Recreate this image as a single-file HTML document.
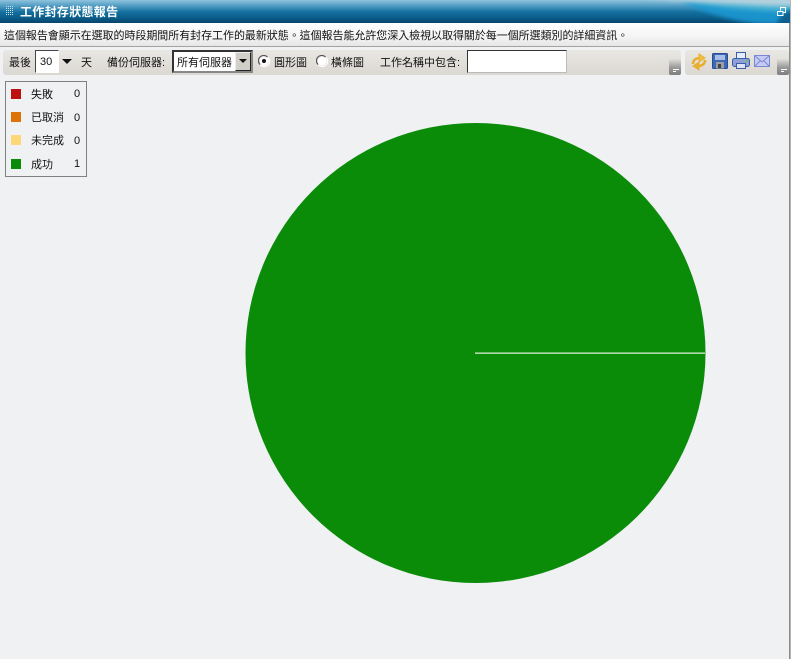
<!DOCTYPE html>
<html><head><meta charset="utf-8">
<style>
html,body{margin:0;padding:0;width:792px;height:659px;overflow:hidden;background:#fff}
body{position:relative;font-family:"Liberation Sans","WenQuanYi Zen Hei","Noto Sans CJK TC",sans-serif;font-size:11px;color:#111}
.a{position:absolute;white-space:nowrap;line-height:12px}
#main{position:absolute;left:0;top:0;width:789px;height:659px;background:#eff1f3}
#rb{position:absolute;left:789px;top:0;width:1px;height:659px;background:#8c8c8c}
#rb2{position:absolute;left:790px;top:0;width:1px;height:659px;background:#b5b5b5}
#title{position:absolute;left:0;top:0;width:790px;height:23px;background:linear-gradient(#8fc3dd 0,#4f9bc2 6px,#14709f 12px,#0b5c88 18px,#07466c 23px);overflow:hidden}
#desc{position:absolute;left:0;top:23px;width:789px;height:24px;background:linear-gradient(#fff,#f4f4f4 60%,#e6e6e6);border-bottom:1px solid #a3a3a3;box-sizing:border-box}
.bar{position:absolute;top:50px;height:25px;background:linear-gradient(#e9e7e3,#dbd8d2);border-radius:3px}
.grip{position:absolute;top:50px;width:12px;height:25px;background:linear-gradient(rgba(222,220,214,0) 0,rgba(222,220,214,0) 35%,#9a9a9a 70%,#7e7e7e);border-radius:0 0 2px 2px}
.grip i{position:absolute;left:4px;bottom:5px;width:6px;height:1px;background:#fff}
.grip b{position:absolute;left:4px;bottom:3px;width:3px;height:1px;background:#fff}
</style></head><body>
<div id="main"></div><div id="rb"></div><div id="rb2"></div>
<div id="title">
<svg width="790" height="23" style="position:absolute;left:0;top:0">
<defs><filter id="b" x="-20%" y="-50%" width="140%" height="200%"><feGaussianBlur stdDeviation="2.200"/></filter></defs>
<path d="M680 2 C705 12 735 24 775 25 L800 12 L800 4Z" fill="#1a98d2" filter="url(#b)" opacity=".9"/>
<path d="M690 2 C720 8 750 11 800 12 L800 2Z" fill="#48b4d2" filter="url(#b)" opacity=".9"/>
<path d="M640 -3 C700 3 750 6 800 6 L800 -3Z" fill="#b4d2de" filter="url(#b)"/>
<path d="M776 26 L782 14 L795 8 L795 26Z" fill="#0a5f8e" filter="url(#b)"/>
<g fill="#cfe3ee"><rect x="6" y="6" width="1" height="1"/><rect x="8" y="6" width="1" height="1"/><rect x="10" y="6" width="1" height="1"/><rect x="12" y="6" width="1" height="1"/><rect x="6" y="8" width="1" height="1"/><rect x="8" y="8" width="1" height="1"/><rect x="10" y="8" width="1" height="1"/><rect x="12" y="8" width="1" height="1"/><rect x="6" y="10" width="1" height="1"/><rect x="8" y="10" width="1" height="1"/><rect x="10" y="10" width="1" height="1"/><rect x="12" y="10" width="1" height="1"/><rect x="6" y="12" width="1" height="1"/><rect x="8" y="12" width="1" height="1"/><rect x="10" y="12" width="1" height="1"/><rect x="12" y="12" width="1" height="1"/><rect x="6" y="14" width="1" height="1"/><rect x="8" y="14" width="1" height="1"/><rect x="10" y="14" width="1" height="1"/><rect x="12" y="14" width="1" height="1"/></g>
<path d="M777.500 11.500h5.500v4h-5.500zM780.500 10.500v-3h5v5h-2" fill="none" stroke="#fff"/>
</svg>
<div class="a" style="left:20px;top:5px;color:#fff;font-size:12px;font-weight:bold;line-height:14px;letter-spacing:.3px">工作封存狀態報告</div>
</div>
<div id="desc"><div class="a" style="left:4px;top:7px;color:#111;letter-spacing:-.05px">這個報告會顯示在選取的時段期間所有封存工作的最新狀態。這個報告能允許您深入檢視以取得關於每一個所選類別的詳細資訊。</div></div>
<div class="bar" style="left:3px;width:678px"></div>
<div class="grip" style="left:669px"><i></i><b></b></div>
<div class="bar" style="left:685px;width:104px"></div>
<div class="grip" style="left:777px"><i></i><b></b></div>
<div class="a" style="left:9px;top:57px">最後</div>
<div style="position:absolute;left:35px;top:50px;width:24px;height:23px;box-sizing:border-box;background:#fff;border:1px solid;border-color:#444 #fff #fff #444"></div>
<div class="a" style="left:40px;top:56px;font-size:11px">30</div>
<svg width="12" height="6" style="position:absolute;left:62px;top:59px"><path d="M0 0H10L5 5Z" fill="#111"/></svg>
<div class="a" style="left:81px;top:57px">天</div>
<div class="a" style="left:107px;top:57px">備份伺服器:</div>
<div style="position:absolute;left:172px;top:50px;width:81px;height:23px;box-sizing:border-box;background:#fff;border:2px solid;border-color:#333 #888 #888 #333"></div>
<div class="a" style="left:177px;top:57px">所有伺服器</div>
<div style="position:absolute;left:235px;top:52px;width:16px;height:19px;box-sizing:border-box;background:#d2cfc8;border:1px solid;border-color:#eee #222 #222 #eee"></div>
<svg width="9" height="5" style="position:absolute;left:239px;top:59px"><path d="M0 0H8L4 4Z" fill="#111"/></svg>
<svg width="14" height="14" style="position:absolute;left:258px;top:55px"><circle cx="6" cy="6" r="4.500" fill="#fff"/><path d="M2 9.500A5 5 0 0 1 9.500 2" fill="none" stroke="#555" stroke-width="1.200"/><path d="M10 2.500A5 5 0 0 1 2.500 10" fill="none" stroke="#fff" stroke-width="1.200"/><circle cx="6" cy="6" r="2" fill="#111"/></svg>
<div class="a" style="left:274px;top:57px">圓形圖</div>
<svg width="14" height="14" style="position:absolute;left:316px;top:55px"><circle cx="6" cy="6" r="4.500" fill="#fff"/><path d="M2 9.500A5 5 0 0 1 9.500 2" fill="none" stroke="#555" stroke-width="1.200"/><path d="M10 2.500A5 5 0 0 1 2.500 10" fill="none" stroke="#fff" stroke-width="1.200"/></svg>
<div class="a" style="left:331px;top:57px">橫條圖</div>
<div class="a" style="left:380px;top:57px">工作名稱中包含:</div>
<div style="position:absolute;left:467px;top:50px;width:100px;height:23px;box-sizing:border-box;background:#fff;border:1px solid;border-color:#333 #bbb #bbb #333"></div>
<svg width="16" height="18" viewBox="0 0 16 18" style="position:absolute;left:691px;top:53px" fill="none" stroke="#e8ae30" stroke-width="2.600"><path d="M2 11C2 7 5 5 9 5"/><path d="M8 1l6 4-6 4z" fill="#f0c040" stroke-width="1"/><path d="M14 7C14 11 11 13 7 13"/><path d="M8 9l-6 4 6 4z" fill="#e8ae30" stroke-width="1"/></svg>
<svg width="16" height="16" viewBox="0 0 16 16" style="position:absolute;left:712px;top:53px"><rect x=".5" y=".5" width="15" height="15" rx="1" fill="#3f68b5" stroke="#2a4a94"/><rect x="3" y="2" width="10" height="5" fill="#a9bde8"/><rect x="4" y="9" width="8" height="6.500" fill="#9a9ea6"/><rect x="6" y="11" width="3" height="4" fill="#444"/></svg>
<svg width="18" height="18" viewBox="0 0 18 18" style="position:absolute;left:732px;top:52px"><rect x="4.500" y=".5" width="9" height="7" fill="#e6ecfa" stroke="#3d5ca8"/><rect x=".5" y="6.500" width="17" height="8" rx="2" fill="#8fa0d8" stroke="#3d5ca8"/><rect x="4.500" y="11.500" width="9" height="5" fill="#dfe4f4" stroke="#3d5ca8"/><rect x="13.500" y="8" width="2" height="2" fill="#5c5"/></svg>
<svg width="17" height="13" viewBox="0 0 17 13" style="position:absolute;left:754px;top:55px"><rect x=".5" y=".5" width="15" height="11" fill="#c5cbf2" stroke="#7a86d6"/><path d="M1 1l7 6 7-6M1 11l5-5M15 11l-5-5" fill="none" stroke="#7a86d6"/></svg>
<div style="position:absolute;left:5px;top:81px;width:82px;height:96px;box-sizing:border-box;border:1px solid #808080;background:#eff1f3"></div>
<div style="position:absolute;left:11px;top:89px;width:10px;height:10px;background:#bd1010"></div>
<div style="position:absolute;left:11px;top:112px;width:10px;height:10px;background:#dd7409"></div>
<div style="position:absolute;left:11px;top:135px;width:10px;height:10px;background:#fed878"></div>
<div style="position:absolute;left:11px;top:159px;width:10px;height:10px;background:#0b8c09"></div>
<div class="a" style="left:31px;top:89px">失敗</div><div class="a" style="left:74px;top:88px">0</div>
<div class="a" style="left:31px;top:112px">已取消</div><div class="a" style="left:74px;top:112px">0</div>
<div class="a" style="left:31px;top:135px">未完成</div><div class="a" style="left:74px;top:135px">0</div>
<div class="a" style="left:31px;top:159px">成功</div><div class="a" style="left:74px;top:158px">1</div>
<svg width="792" height="659" style="position:absolute;left:0;top:0"><circle cx="475.500" cy="353" r="230" fill="#0b8c09"/><rect x="475" y="352.500" width="230" height="1.300" fill="#d8ecd4"/></svg>
</body></html>
